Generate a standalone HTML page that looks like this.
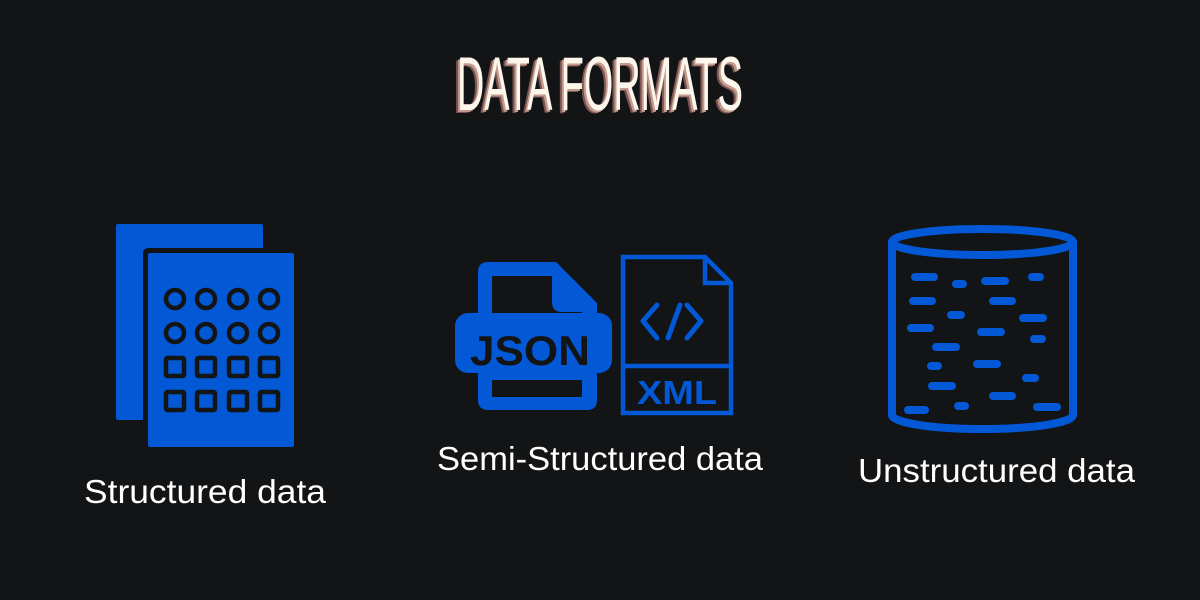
<!DOCTYPE html>
<html><head><meta charset="utf-8"><style>
html,body{margin:0;padding:0;background:#131416;}
svg{display:block}
</style></head><body>
<svg width="1200" height="600" viewBox="0 0 1200 600" xmlns="http://www.w3.org/2000/svg">
<rect width="1200" height="600" fill="#131416"/>
<!-- Title -->
<g font-family="'Liberation Sans',sans-serif" font-size="40">
<text transform="translate(453,113) scale(1,1.9)" x="0" y="0" textLength="286" lengthAdjust="spacingAndGlyphs" fill="#7a5550">DATA FORMATS</text>
<text transform="translate(455,112) scale(1,1.9)" x="0" y="0" textLength="286" lengthAdjust="spacingAndGlyphs" fill="#c39a8d">DATA FORMATS</text>
<text transform="translate(457,110) scale(1,1.9)" x="0" y="0" textLength="286" lengthAdjust="spacingAndGlyphs" fill="#fdf6ec">DATA FORMATS</text>
</g>

<!-- Structured icon -->
<rect x="116" y="224" width="147" height="196" rx="2" fill="#0358d6"/>
<rect x="143" y="248" width="156" height="204" rx="5" fill="#131416"/>
<rect x="148" y="253" width="146" height="194" rx="2" fill="#0358d6"/>
<g fill="none" stroke="#131416" stroke-width="4.5">
<circle cx="175" cy="299" r="9"/><circle cx="206" cy="299" r="9"/><circle cx="238" cy="299" r="9"/><circle cx="269" cy="299" r="9"/>
<circle cx="175" cy="333" r="9"/><circle cx="206" cy="333" r="9"/><circle cx="238" cy="333" r="9"/><circle cx="269" cy="333" r="9"/>
<rect x="166" y="358" width="18" height="18" rx="1.5"/><rect x="197" y="358" width="18" height="18" rx="1.5"/><rect x="229" y="358" width="18" height="18" rx="1.5"/><rect x="260" y="358" width="18" height="18" rx="1.5"/>
<rect x="166" y="392" width="18" height="18" rx="1.5"/><rect x="197" y="392" width="18" height="18" rx="1.5"/><rect x="229" y="392" width="18" height="18" rx="1.5"/><rect x="260" y="392" width="18" height="18" rx="1.5"/>
</g>

<!-- JSON icon -->
<path d="M488 262 H556 L597 303 V400 Q597 410 587 410 H488 Q478 410 478 400 V272 Q478 262 488 262 Z" fill="#0358d6"/>
<rect x="455" y="313" width="157" height="60" rx="13" fill="#0358d6"/>
<path d="M492 276 H552 V302 Q552 312 562 312 H582 V313 H492 Z" fill="#131416"/>
<rect x="492" y="380" width="90" height="17" fill="#131416"/>
<text x="470" y="365" font-family="'Liberation Sans',sans-serif" font-weight="bold" font-size="42" fill="#131416" textLength="120" lengthAdjust="spacingAndGlyphs">JSON</text>

<!-- XML icon -->
<path d="M623 257 H705 L731 283 V413 H623 Z" fill="none" stroke="#0358d6" stroke-width="4.5"/>
<path d="M705 257 V283 H731" fill="none" stroke="#0358d6" stroke-width="4.5"/>
<line x1="623" y1="366" x2="731" y2="366" stroke="#0358d6" stroke-width="4.5"/>
<g fill="none" stroke="#0358d6" stroke-width="5" stroke-linecap="round" stroke-linejoin="round">
<path d="M657 305 L643 321 L657 338"/>
<path d="M687 305 L701 321 L687 338"/>
<path d="M680 305 L668 338"/>
</g>
<text x="637" y="404" font-family="'Liberation Sans',sans-serif" font-weight="bold" font-size="33" fill="#0358d6" textLength="80" lengthAdjust="spacingAndGlyphs">XML</text>

<!-- Cylinder -->
<g fill="none" stroke="#0358d6" stroke-width="8" stroke-linecap="round">
<ellipse cx="982.5" cy="242" rx="90.5" ry="13"/>
<path d="M892 242 V415 A90.5 14 0 0 0 1073 415 V242"/>
<path d="M915 277H934M956 284H963M985 281H1005M1032 277H1040M913 301H932M993 301H1012M951 315H961M1023 318H1043M911 328H930M981 332H1001M1034 339H1042M936 347H956M931 366H938M977 364H997M1026 378H1035M932 386H952M993 396H1012M908 410H925M958 406H965M1037 407H1057"/>
</g>

<!-- Labels -->
<g font-family="'Liberation Sans',sans-serif" font-size="33" fill="#ffffff">
<text x="84" y="503" textLength="242" lengthAdjust="spacingAndGlyphs">Structured data</text>
<text x="437" y="470" textLength="326" lengthAdjust="spacingAndGlyphs">Semi-Structured data</text>
<text x="858" y="482" textLength="277" lengthAdjust="spacingAndGlyphs">Unstructured data</text>
</g>
</svg>
</body></html>
